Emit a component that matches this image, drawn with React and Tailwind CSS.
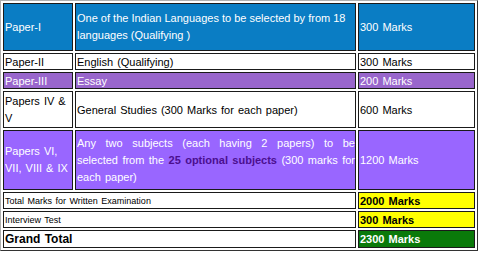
export default function App() {
  const cell = "border border-[#1a1a1a] p-0 pl-px align-middle";
  return (
    <div className="w-[480px] h-[260px] bg-white font-['Liberation_Sans',Arial,sans-serif] text-[11px] leading-[14px] [word-spacing:1px] text-black">
      <table className="table-fixed w-[478px] border border-t-[#b0b0b0] border-l-[#b0b0b0] border-r-[#333] border-b-[#333] border-separate border-spacing-[2px]">
        <colgroup>
          <col className="w-[70px]" />
          <col className="w-[281px]" />
          <col className="w-[117px]" />
        </colgroup>
        <tbody>
          <tr className="h-[48px] bg-[#0a7dc4] text-white">
            <td className={cell}>Paper-I</td>
            <td className={`${cell} leading-[17px] [word-spacing:0px]`}>One of the Indian Languages to be selected by from 18 languages (Qualifying )</td>
            <td className={cell}>300 Marks</td>
          </tr>
          <tr className="h-[17px]">
            <td className={cell}>Paper-II</td>
            <td className={cell}>English (Qualifying)</td>
            <td className={cell}>300 Marks</td>
          </tr>
          <tr className="h-[17px] bg-[#9966cc] text-white">
            <td className={cell}>Paper-III</td>
            <td className={cell}>Essay</td>
            <td className={cell}>200 Marks</td>
          </tr>
          <tr className="h-[37px]">
            <td className={`${cell} leading-[17px]`}>Papers IV &amp; V</td>
            <td className={cell}>General Studies (300 Marks for each paper)</td>
            <td className={cell}>600 Marks</td>
          </tr>
          <tr className="h-[60px] bg-[#9966ff] text-white">
            <td className={`${cell} leading-[17px]`}>Papers VI, VII, VIII &amp; IX</td>
            <td className={`${cell} text-justify leading-[17px]`}>
              Any two subjects (each having 2 papers) to be selected from the{" "}
              <b className="text-[#4b0f8f]">25 optional subjects</b> (300 marks for each paper)
            </td>
            <td className={cell}>1200 Marks</td>
          </tr>
          <tr className="h-[17px]">
            <td className={`${cell} text-[9px]`} colSpan={2}>Total Marks for Written Examination</td>
            <td className={`${cell} bg-[#ffff00] font-bold`}>2000 Marks</td>
          </tr>
          <tr className="h-[17px]">
            <td className={`${cell} text-[9px]`} colSpan={2}>Interview Test</td>
            <td className={`${cell} bg-[#ffff00] font-bold`}>300 Marks</td>
          </tr>
          <tr className="h-[18px]">
            <td className={`${cell} font-bold text-[12px]`} colSpan={2}>Grand Total</td>
            <td className={`${cell} bg-[#0a7a0a] text-white font-bold`}>2300 Marks</td>
          </tr>
        </tbody>
      </table>
    </div>
  );
}
